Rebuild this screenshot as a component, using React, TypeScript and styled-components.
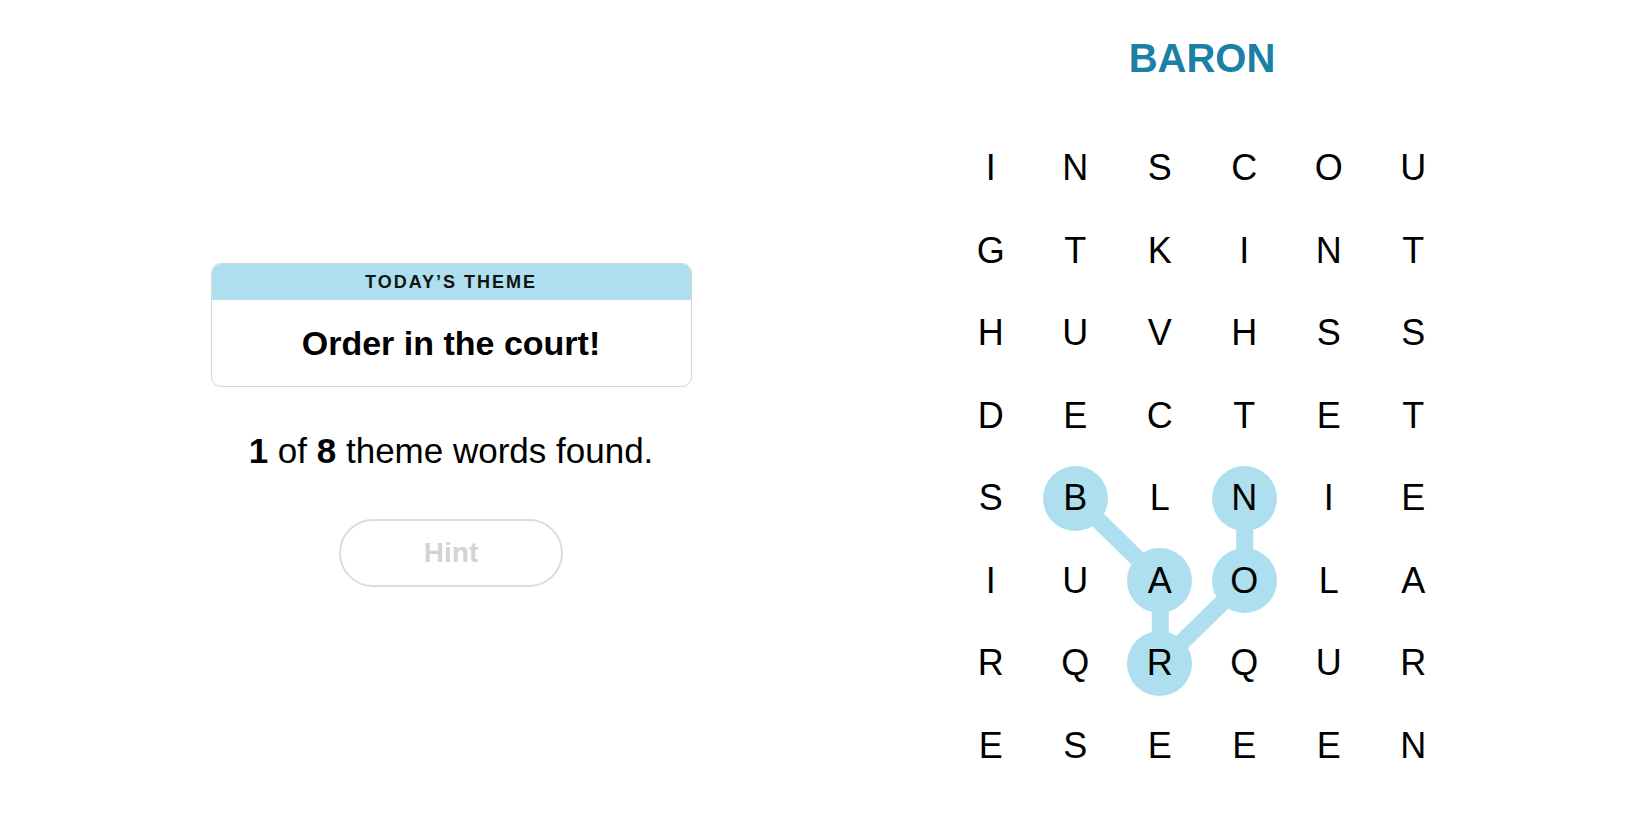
import { createGlobalStyle, styled } from 'styled-components';

const GRID = [
  'INSCOU',
  'GTKINT',
  'HUVHSS',
  'DECTET',
  'SBLNIE',
  'IUAOLA',
  'RQRQUR',
  'ESEEEN',
];

// path of the word in progress, as [col, row]
const path: [number, number][] = [
  [1, 4],
  [2, 5],
  [2, 6],
  [3, 5],
  [3, 4],
];

const CELL_W = 84.5;
const CELL_H = 82.5;

const isSelected = (col: number, row: number) => path.some(([c, r]) => c === col && r === row);

const GlobalStyle = createGlobalStyle`
  body {
    margin: 0;
    background: #ffffff;
    font-family: "Liberation Sans", Arial, sans-serif;
    color: #121212;
  }
`;

const App = () => {
  const cx = (c: number) => CELL_W / 2 + c * CELL_W;
  const cy = (r: number) => CELL_H / 2 + r * CELL_H;

  return (
    <Page>
      <GlobalStyle />
      <SidePanel>
        <ThemeCard>
          <ThemeHeader>TODAY’S THEME</ThemeHeader>
          <ThemeBody>Order in the court!</ThemeBody>
        </ThemeCard>
        <Progress>
          <b>1</b> of <b>8</b> theme words found.
        </Progress>
        <HintButton disabled>Hint</HintButton>
      </SidePanel>

      <BoardPanel>
        <CurrentWord>BARON</CurrentWord>
        <Board>
          <Lines width={CELL_W * 6} height={CELL_H * 8}>
            {path.slice(1).map(([c, r], i) => {
              const [pc, pr] = path[i];
              return <line key={i} x1={cx(pc)} y1={cy(pr)} x2={cx(c)} y2={cy(r)} />;
            })}
          </Lines>
          {GRID.map((row, r) =>
            row.split('').map((ch, c) => (
              <Cell key={`${r}-${c}`}>
                <Letter $selected={isSelected(c, r)}>{ch}</Letter>
              </Cell>
            )),
          )}
        </Board>
      </BoardPanel>
    </Page>
  );
};

export default App;

const Page = styled.div`
  display: flex;
  width: 1650px;
  height: 825px;
`;

const SidePanel = styled.div`
  width: 902px;
  display: flex;
  flex-direction: column;
  align-items: center;
  padding-top: 263px;
  box-sizing: border-box;
`;

const ThemeCard = styled.div`
  width: 481px;
  border: 1px solid #d6d6d6;
  border-radius: 10px;
  overflow: hidden;
  box-sizing: border-box;
`;

const ThemeHeader = styled.div`
  height: 36px;
  background: #aedfee;
  display: flex;
  align-items: center;
  justify-content: center;
  font-size: 18px;
  font-weight: 700;
  letter-spacing: 2px;
  color: #121212;
`;

const ThemeBody = styled.div`
  height: 86px;
  display: flex;
  align-items: center;
  justify-content: center;
  font-size: 34px;
  font-weight: 700;
  color: #000;
`;

const Progress = styled.div`
  margin-top: 44px;
  font-size: 35px;
  line-height: 40px;
  color: #000;

  b {
    font-weight: 700;
  }
`;

const HintButton = styled.button`
  margin-top: 48px;
  width: 224px;
  height: 68px;
  border: 2px solid #dcdcdc;
  border-radius: 34px;
  background: #fff;
  font-family: "Liberation Sans", Arial, sans-serif;
  font-size: 28px;
  font-weight: 700;
  color: #d3d3d3;
`;

const BoardPanel = styled.div`
  width: 600px;
  display: flex;
  flex-direction: column;
  align-items: center;
`;

const CurrentWord = styled.div`
  margin-top: 35px;
  height: 46px;
  line-height: 46px;
  font-size: 40px;
  font-weight: 700;
  color: #1a80a6;
`;

const Board = styled.div`
  position: relative;
  margin-top: 46px;
  display: grid;
  grid-template-columns: repeat(6, ${CELL_W}px);
  grid-template-rows: repeat(8, ${CELL_H}px);
`;

const Lines = styled.svg`
  position: absolute;
  left: 0;
  top: 0;
  pointer-events: none;

  line {
    stroke: #aedfee;
    stroke-width: 17;
  }
`;

const Cell = styled.div`
  position: relative;
  display: flex;
  align-items: center;
  justify-content: center;
`;

const Letter = styled.span<{ $selected: boolean }>`
  width: 65px;
  height: 65px;
  border-radius: 50%;
  display: flex;
  align-items: center;
  justify-content: center;
  font-size: 36px;
  color: #000;
  background: ${({ $selected }) => ($selected ? '#aedfee' : 'transparent')};
`;
